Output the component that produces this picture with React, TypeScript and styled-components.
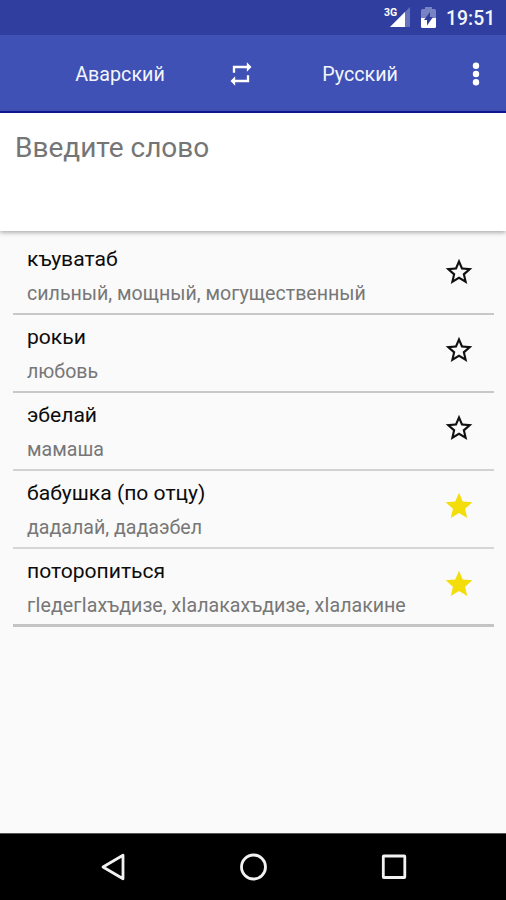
import React from 'react';
import styled, { createGlobalStyle } from 'styled-components';

const GlobalStyle = createGlobalStyle`
  * { box-sizing: border-box; }
  html, body { margin: 0; padding: 0; background: #fafafa; }
  body { font-family: Roboto, "Noto Sans", sans-serif; }
`;

const Screen = styled.div`
  width: 506px;
  height: 900px;
  display: flex;
  flex-direction: column;
  background: #fafafa;
  overflow: hidden;
`;

const StatusBar = styled.div`
  flex: none;
  height: 35px;
  padding-right: 11px;
  display: flex;
  align-items: center;
  justify-content: flex-end;
  background: #303f9f;
  color: #f3f5fc;
`;

const SignalIcon = styled.svg`
  width: 28px;
  height: 24px;
  margin-right: 9px;
  margin-bottom: 3px;
`;

const NetworkLabel = styled.text`
  font: 700 10.5px Roboto, sans-serif;
  fill: #fff;
`;

const BatteryIcon = styled.svg`
  width: 15px;
  height: 21px;
  margin-right: 10px;
`;

const Clock = styled.span`
  width: 49px;
  padding-top: 2px;
  font-size: 19.4px;
  font-weight: 500;
  line-height: 35px;
  white-space: nowrap;
`;

const Toolbar = styled.header`
  flex: none;
  height: 78px;
  padding: 1px 0 0 32px;
  display: grid;
  grid-template-columns: 176px 66px 172px 60px;
  align-items: center;
  justify-items: center;
  background: #3f51b5;
  border-bottom: 2px solid #1018a0;
  color: #f4f5fc;
`;

const Language = styled.span`
  padding-top: 2px;
  font-size: 19.7px;
  font-weight: 400;
  white-space: nowrap;
`;

const SwapIcon = styled.svg`
  width: 28px;
  height: 28px;
`;

const MenuIcon = styled.svg`
  width: 10px;
  height: 26px;
`;

const SearchField = styled.div`
  flex: none;
  height: 118px;
  padding: 17px 15px;
  background: #fff;
  box-shadow: 0 1px 5px rgba(0, 0, 0, 0.4);
  color: #757575;
  font-size: 28px;
  line-height: 36px;
`;

const WordList = styled.ul`
  flex: 1;
  list-style: none;
  margin: 0;
  padding: 6px 12px 0 13px;
`;

const WordRow = styled.li<{ $edge: string }>`
  height: 77.9px;
  padding: 0 19px 0 14px;
  display: flex;
  justify-content: space-between;
  border-bottom: 2px solid ${(p) => p.$edge};

  &:last-child {
    height: 78.8px;
    border-bottom-width: 3px;
  }
`;

const WordText = styled.div`
  padding-top: 8.4px;
`;

const Word = styled.div`
  color: #0c0c0c;
  font-size: 21.1px;
  line-height: 28px;
  white-space: nowrap;
`;

const Translation = styled.div`
  margin-top: 7px;
  color: #777;
  font-size: 19.6px;
  line-height: 28px;
  white-space: nowrap;
`;

const StarIcon = styled.svg`
  flex: none;
  width: 32px;
  height: 32px;
  margin-top: 19.3px;
`;

const NavBar = styled.nav`
  flex: none;
  height: 67px;
  padding: 0 97px 0 98px;
  display: flex;
  align-items: center;
  justify-content: space-between;
  background: #000;
  border-top: 1px solid #555;
`;

const NavIcon = styled.svg`
  width: 30px;
  height: 30px;
  fill: none;
  stroke: #f2f2f2;
  stroke-width: 2.8px;
  stroke-linejoin: round;
`;

type Entry = {
  word: string;
  translation: string;
  starred: boolean;
  edge: string;
};

const entries: Entry[] = [
  { word: 'къуватаб', translation: 'сильный, мощный, могущественный', starred: false, edge: '#c8c8c8' },
  { word: 'рокьи', translation: 'любовь', starred: false, edge: '#c8c8c8' },
  { word: 'эбелай', translation: 'мамаша', starred: false, edge: '#d2d2d2' },
  { word: 'бабушка (по отцу)', translation: 'дадалай, дадаэбел', starred: true, edge: '#d6d6d6' },
  { word: 'поторопиться', translation: 'гIедегIахъдизе, хIалакахъдизе, хIалакине', starred: true, edge: '#c4c4c4' },
];

const STAR = 'M12 17.27 18.18 21l-1.64-7.03L22 9.24l-7.19-.61L12 2 9.19 8.63 2 9.24l5.46 4.73L5.82 21z';
const STAR_OUTLINE =
  'M22 9.24l-7.19-.62L12 2 9.19 8.63 2 9.24l5.46 4.73L5.82 21 12 17.27 18.18 21l-1.63-7.03L22 9.24zM12 15.4l-3.76 2.27 1-4.28-3.32-2.88 4.38-.38L12 6.1l1.71 4.04 4.38.38-3.32 2.88 1 4.28L12 15.4z';

export default function App() {
  return (
    <>
      <GlobalStyle />
      <Screen>
        <StatusBar>
          <SignalIcon viewBox="0 0 28 24">
            <path d="M26 3v20H6z" fill="#6673bb" />
            <path d="M21 8v15H6z" fill="#fff" />
            <NetworkLabel x="0" y="11.5">3G</NetworkLabel>
          </SignalIcon>
          <BatteryIcon viewBox="0 0 15 21">
            <path d="M4 0h7v2h2.5a1.5 1.5 0 0 1 1.5 1.5V11H0V3.5A1.5 1.5 0 0 1 1.5 2H4z" fill="#7883c4" />
            <path d="M0 11h15v8.500a1.500 1.500 0 0 1-1.500 1.500h-12A1.500 1.500 0 0 1 0 19.500z" fill="#fff" />
            <path d="M9 5v5h3l-6 8.500v-5.500H3z" fill="#303f9f" />
          </BatteryIcon>
          <Clock>19:51</Clock>
        </StatusBar>
        <Toolbar>
          <Language>Аварский</Language>
          <SwapIcon viewBox="0 0 24 24" fill="#fff">
            <path d="M7 7h10v3l4-4-4-4v3H5v6h2V7zm10 10H7v-3l-4 4 4 4v-3h12v-6h-2v4z" />
          </SwapIcon>
          <Language>Русский</Language>
          <MenuIcon viewBox="0 0 10 26" fill="#fff">
            <circle cx="5" cy="4.7" r="3.2" />
            <circle cx="5" cy="13" r="3.2" />
            <circle cx="5" cy="21.3" r="3.2" />
          </MenuIcon>
        </Toolbar>
        <SearchField>Введите слово</SearchField>
        <WordList>
          {entries.map((e) => (
            <WordRow key={e.word} $edge={e.edge}>
              <WordText>
                <Word>{e.word}</Word>
                <Translation>{e.translation}</Translation>
              </WordText>
              <StarIcon viewBox="0 0 24 24" fill={e.starred ? '#f3dd0b' : '#111'}>
                <path d={e.starred ? STAR : STAR_OUTLINE} />
              </StarIcon>
            </WordRow>
          ))}
        </WordList>
        <NavBar>
          <NavIcon viewBox="0 0 30 30">
            <path d="M25 3.2v23.600L5 15z" />
          </NavIcon>
          <NavIcon viewBox="0 0 30 30">
            <circle cx="14.500" cy="15" r="12" />
          </NavIcon>
          <NavIcon viewBox="0 0 30 30">
            <rect x="4.300" y="4" width="21.500" height="21.500" rx="0.500" />
          </NavIcon>
        </NavBar>
      </Screen>
    </>
  );
}
